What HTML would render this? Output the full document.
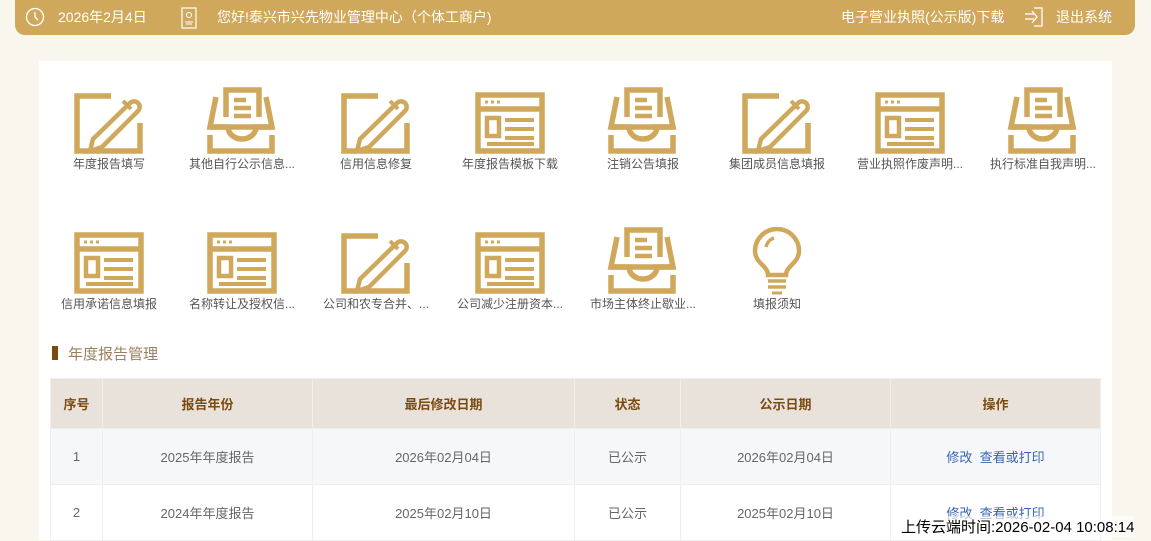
<!DOCTYPE html>
<html><head><meta charset="utf-8">
<style>
*{margin:0;padding:0;box-sizing:border-box}
body{width:1151px;height:540px;overflow:hidden;background:#f9f6ee;font-family:"Liberation Sans","Noto Sans CJK SC",sans-serif;position:relative}
.top{position:absolute;left:15px;top:0;width:1120px;height:35px;background:#d0a85c;border-radius:0 0 10px 10px;color:#fff;font-size:14px}
.top span{position:absolute;top:7px}
.panel{position:absolute;left:39px;top:61px;width:1073px;height:479px;background:#fff}
.it{position:absolute;width:130px;text-align:center;font-size:12px;color:#555}
.it svg{display:block;margin:0 auto 0}
.title{position:absolute;left:52px;top:343px;font-size:15px;color:#9a8060}
.title i{position:absolute;left:0;top:3px;width:6px;height:14px;background:#7a4a10}
.title b{font-weight:normal;margin-left:16px}
table{position:absolute;left:50px;top:378px;width:1051px;border-collapse:collapse;font-size:13px;color:#666}
th{background:#e9e2da;color:#7a4a10;height:50px;border:1px solid #f2eee9;font-size:13px}
td{height:56px;text-align:center;border:1px solid #eee}
tr.a td{background:#f6f7f9}
a{color:#3a64b0;text-decoration:none}
.wm{position:absolute;left:901px;top:516px;font-size:15px;color:#000;background:rgba(255,255,255,.6)}
</style></head><body>
<svg width="0" height="0" style="position:absolute">
<defs>
<symbol id="ed" viewBox="0 0 72 68"><g fill="none" stroke="#d0a85c" stroke-width="5.5"><path d="M38 9H4V64H67V36"/><path d="M20 52l-3 12 12-4 36-36a5 5 0 0 0-8-8z" stroke-width="4.5"/><path d="M50 14l8 8" stroke-width="4"/></g></symbol>
<symbol id="bx" viewBox="0 0 72 68"><g fill="none" stroke="#d0a85c" stroke-width="5.5"><path d="M20 30V3H53V30"/><path d="M28 13H40M28 21H45M28 29H45" stroke-width="4.5"/><path d="M10 10L4 40H66L60 10"/><path d="M4 40H22a14 12 0 0 0 28 0H66"/><path d="M4 48V64H66V48"/></g></symbol>
<symbol id="br" viewBox="0 0 72 68"><g fill="none" stroke="#d0a85c" stroke-width="5.5"><rect x="4" y="8" width="64" height="56"/><path d="M4 22H68"/><path d="M11 15H14M17 15H20M23 15H26" stroke-width="3"/><rect x="13" y="31" width="12" height="18" stroke-width="4.5"/><path d="M31 33H60M31 42H60M31 51H60M13 57H60" stroke-width="4"/></g></symbol>
<symbol id="lb" viewBox="0 0 72 68"><g fill="none" stroke="#d0a85c" stroke-width="4.5"><path d="M27 48c0-9-13-12-13-24a22 22 0 0 1 44 0c0 12-13 15-13 24z"/><path d="M25 20a12 12 0 0 1 8-9" stroke-width="3.5"/><path d="M27 54H45M27 60H45" stroke-width="3.5"/><path d="M31 66H41" stroke-width="3"/></g></symbol>
</defs></svg>
<div class="top">
<svg style="position:absolute;left:10px;top:7px" width="20" height="20" viewBox="0 0 20 20"><circle cx="10" cy="10" r="8.5" fill="none" stroke="#fff" stroke-width="1.3"/><path d="M10 5v5l3 3" fill="none" stroke="#fff" stroke-width="1.3"/></svg>
<span style="left:43px">2026年2月4日</span>
<svg style="position:absolute;left:166px;top:7px" width="16" height="22" viewBox="0 0 16 22"><rect x="1" y="1" width="14" height="20" fill="none" stroke="#fff" stroke-width="1.2"/><circle cx="8" cy="8" r="2.5" fill="none" stroke="#fff"/><path d="M4 15h8M5 17h6" stroke="#fff"/></svg>
<span style="left:202px">您好!泰兴市兴先物业管理中心（个体工商户)</span>
<span style="left:826px">电子营业执照(公示版)下载</span>
<svg style="position:absolute;left:1008px;top:6px" width="22" height="22" viewBox="0 0 22 22"><path d="M11 2h8v18h-8" fill="none" stroke="#fff" stroke-width="1.3"/><path d="M2 8h9M2 13h9M9 5l5 6-5 6" fill="none" stroke="#fff" stroke-width="1.3"/></svg>
<span style="left:1041px">退出系统</span>
</div>
<div class="panel"></div>
<div class="it" style="left:44px;top:87px"><svg width="72" height="68"><use href="#ed"/></svg>年度报告填写</div>
<div class="it" style="left:177px;top:87px"><svg width="72" height="68"><use href="#bx"/></svg>其他自行公示信息...</div>
<div class="it" style="left:311px;top:87px"><svg width="72" height="68"><use href="#ed"/></svg>信用信息修复</div>
<div class="it" style="left:445px;top:87px"><svg width="72" height="68"><use href="#br"/></svg>年度报告模板下载</div>
<div class="it" style="left:578px;top:87px"><svg width="72" height="68"><use href="#bx"/></svg>注销公告填报</div>
<div class="it" style="left:712px;top:87px"><svg width="72" height="68"><use href="#ed"/></svg>集团成员信息填报</div>
<div class="it" style="left:845px;top:87px"><svg width="72" height="68"><use href="#br"/></svg>营业执照作废声明...</div>
<div class="it" style="left:978px;top:87px"><svg width="72" height="68"><use href="#bx"/></svg>执行标准自我声明...</div>
<div class="it" style="left:44px;top:227px"><svg width="72" height="68"><use href="#br"/></svg>信用承诺信息填报</div>
<div class="it" style="left:177px;top:227px"><svg width="72" height="68"><use href="#br"/></svg>名称转让及授权信...</div>
<div class="it" style="left:311px;top:227px"><svg width="72" height="68"><use href="#ed"/></svg>公司和农专合并、...</div>
<div class="it" style="left:445px;top:227px"><svg width="72" height="68"><use href="#br"/></svg>公司减少注册资本...</div>
<div class="it" style="left:578px;top:227px"><svg width="72" height="68"><use href="#bx"/></svg>市场主体终止歇业...</div>
<div class="it" style="left:712px;top:227px"><svg width="72" height="68"><use href="#lb"/></svg>填报须知</div>
<div class="title"><i></i><b>年度报告管理</b></div>
<table>
<tr><th style="width:52px">序号</th><th style="width:210px">报告年份</th><th style="width:262px">最后修改日期</th><th style="width:106px">状态</th><th style="width:210px">公示日期</th><th>操作</th></tr>
<tr class="a"><td>1</td><td>2025年年度报告</td><td>2026年02月04日</td><td>已公示</td><td>2026年02月04日</td><td><a>修改</a>&nbsp; <a>查看或打印</a></td></tr>
<tr><td>2</td><td>2024年年度报告</td><td>2025年02月10日</td><td>已公示</td><td>2025年02月10日</td><td><a>修改</a>&nbsp; <a>查看或打印</a></td></tr>
</table>
<div class="wm">上传云端时间:2026-02-04 10:08:14</div>
</body></html>
